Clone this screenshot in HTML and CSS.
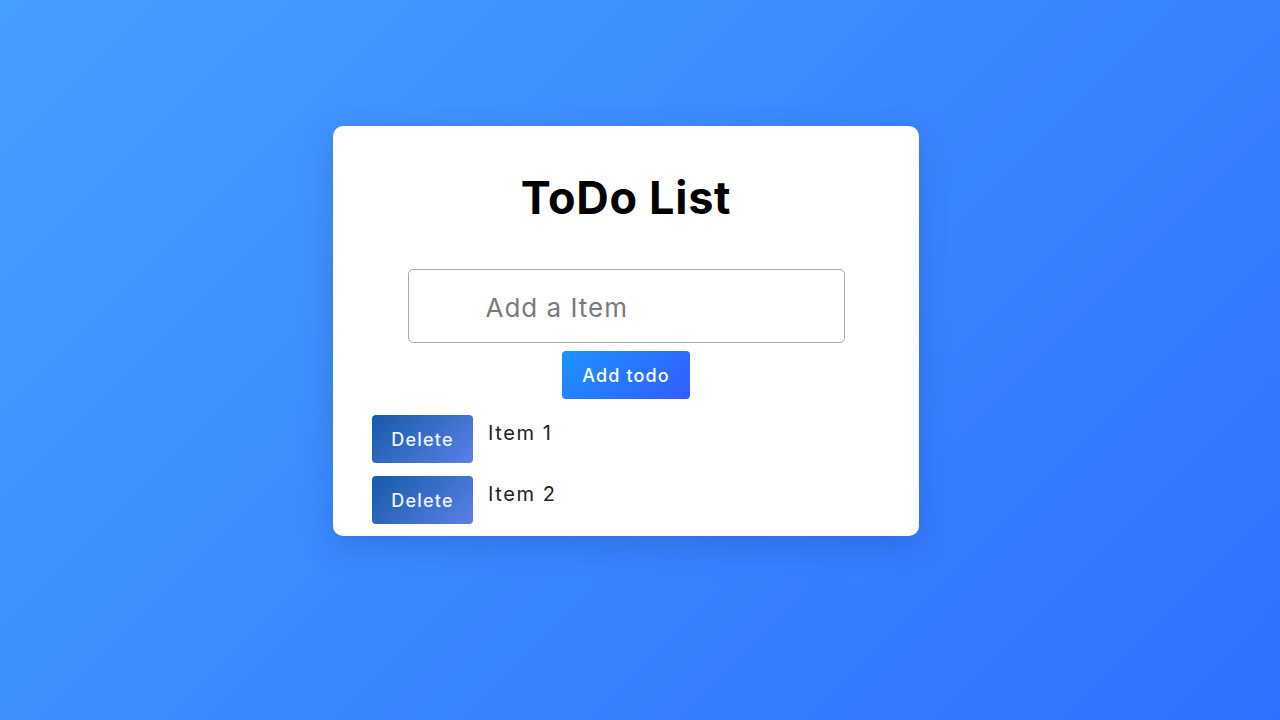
FILE: index.html
```html
<!DOCTYPE html>
<html lang="en">
<head>
<meta charset="utf-8">
<title>ToDo List</title>
<link rel="stylesheet" href="styles.css">
</head>
<body>
<main class="card">
  <h1 class="title">ToDo List</h1>
  <form class="add-form">
    <input class="add-input" type="text" placeholder="Add a Item">
    <button class="add-btn" type="button">Add todo</button>
  </form>
  <ul class="todo-list">
    <li class="todo-item"><button class="del-btn" type="button">Delete</button><span class="todo-text">Item 1</span></li>
    <li class="todo-item"><button class="del-btn" type="button">Delete</button><span class="todo-text">Item 2</span></li>
  </ul>
</main>
</body>
</html>
```

FILE: styles.css
```css
* { box-sizing: border-box; }
html, body { height: 100%; }
body {
  margin: 0;
  font-family: Inter, "Open Sans", sans-serif;
  background: linear-gradient(135deg, #459fff 0%, #3070ff 100%);
  display: flex;
  justify-content: center;
  align-items: flex-start;
  padding: 126px 28px 0 0;
}
.card {
  width: 586px;
  height: 410px;
  background: #fff;
  border-radius: 10px;
  box-shadow: 0 10px 30px rgba(20, 60, 140, 0.25);
  padding: 40px 39px 0;
}
.title {
  margin: 0;
  text-align: center;
  font-size: 45px;
  font-weight: 700;
  line-height: 64px;
  color: #000;
  letter-spacing: 0.7px;
}
.add-form {
  display: flex;
  flex-direction: column;
  align-items: center;
  gap: 8px;
  margin-top: 39px;
}
.add-input {
  width: 437px;
  height: 74px;
  border: 1px solid #a9a9a9;
  border-radius: 5px;
  padding: 2px 0 0 77px;
  font-family: inherit;
  font-size: 26px;
  letter-spacing: 1px;
  color: #333;
  outline: none;
}
.add-input::placeholder { color: #7a7a7a; }
.add-btn {
  width: 128px;
  height: 48px;
  border: none;
  border-radius: 4px;
  background: linear-gradient(135deg, #1c93ff 0%, #335cff 100%);
  color: #fff;
  font-family: inherit;
  font-size: 18px;
  letter-spacing: 1.1px;
  font-weight: 500;
}
.todo-list {
  list-style: none;
  margin: 16px 0 0;
  padding: 0;
  display: flex;
  flex-direction: column;
  gap: 13px;
}
.todo-item {
  display: flex;
  align-items: flex-start;
  gap: 15px;
}
.del-btn {
  width: 101px;
  height: 48px;
  border: none;
  border-radius: 4px;
  background: linear-gradient(135deg, #165aa8 0%, #5b80e8 100%);
  color: #eef2ff;
  font-family: inherit;
  font-size: 18px;
  letter-spacing: 1.2px;
  font-weight: 500;
}
.todo-text {
  font-size: 20px;
  color: #222;
  line-height: 1;
  letter-spacing: 1.6px;
  padding-top: 8px;
}
```
